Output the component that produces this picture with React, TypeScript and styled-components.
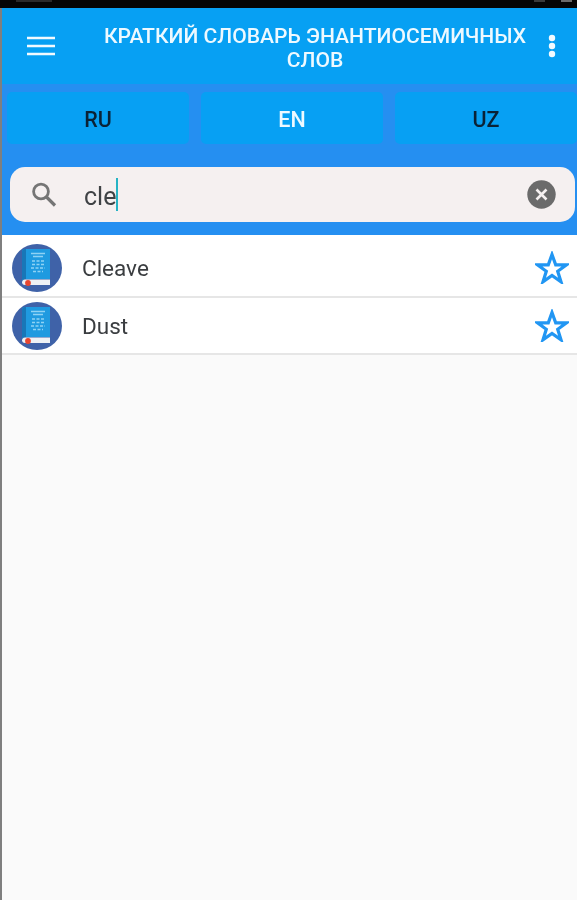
import React from "react";
import styled, { createGlobalStyle } from "styled-components";

const Global = createGlobalStyle`
  html, body { margin: 0; padding: 0; background: #fafafa; }
  * { box-sizing: border-box; }
`;

const Screen = styled.div`
  width: 577px;
  height: 900px;
  display: flex;
  flex-direction: column;
  overflow: hidden;
  font-family: Roboto, "Liberation Sans", sans-serif;
  filter: blur(0.6px);
`;

const StatusBar = styled.div`
  height: 8px;
  flex: none;
  background: #050505;
  display: flex;
  align-items: flex-start;
  padding: 0 5px 0 16px;
`;

const StatusMark = styled.span<{ $w: number; $tone: string; $gap?: number }>`
  width: ${(p) => p.$w}px;
  height: 2px;
  background: ${(p) => p.$tone};
  margin-left: ${(p) => p.$gap ?? 0}px;
`;

const Body = styled.div`
  flex: 1;
  display: flex;
  min-height: 0;
`;

const EdgeStrip = styled.div`
  width: 2px;
  flex: none;
  background: #7f7f7f;
`;

const Main = styled.div`
  flex: 1;
  min-width: 0;
  display: flex;
  flex-direction: column;
  background: #fafafa;
`;

const AppBar = styled.header`
  height: 76px;
  flex: none;
  display: flex;
  align-items: center;
  background: #07a0f3;
`;

const MenuButton = styled.div`
  width: 78px;
  flex: none;
  display: flex;
  justify-content: center;
  margin-top: -1px;
`;

const Title = styled.h1`
  flex: 1;
  min-width: 0;
  margin: 4px 0 0;
  padding-left: 23px;
  color: #eef9ff;
  font-size: 21.1px;
  line-height: 24.5px;
  font-weight: 500;
  text-align: center;
  white-space: nowrap;
`;

const MoreButton = styled.div`
  width: 50px;
  flex: none;
  display: flex;
  justify-content: center;
`;

const LangPanel = styled.div`
  height: 151px;
  flex: none;
  background: #258ff1;
  display: flex;
  flex-direction: column;
`;

const Tabs = styled.div`
  display: grid;
  grid-template-columns: 182px 182px 182px;
  column-gap: 12px;
  padding: 8px 0 0 5px;
`;

const Tab = styled.div<{ $active?: boolean }>`
  height: 52px;
  padding-top: 2px;
  border-radius: 5px;
  background: #07a0f3;
  display: flex;
  align-items: center;
  justify-content: center;
  font-size: 21.5px;
  font-weight: 500;
  color: ${(p) => (p.$active ? "#eef9ff" : "#0a2236")};
`;

const Search = styled.div`
  margin: 23px 2px 0 8px;
  height: 55px;
  border-radius: 15px;
  background: #f5f0f0;
  display: flex;
  align-items: center;
  padding: 0 19px 0 21px;
`;

const SearchText = styled.div`
  flex: 1;
  margin-left: 27px;
  display: flex;
  align-items: center;
  font-size: 25px;
  color: #3f4245;
`;

const Typed = styled.span`
  padding-top: 3px;
`;

const Caret = styled.span`
  width: 2px;
  height: 33px;
  background: #26b3c4;
`;

const List = styled.div`
  display: flex;
  flex-direction: column;
`;

const Row = styled.div<{ $first?: boolean }>`
  height: ${(p) => (p.$first ? "63px" : "57px")};
  padding: ${(p) => (p.$first ? "4px" : "0")} 8px 0 10px;
  display: flex;
  align-items: center;
  background: #fff;
  border-bottom: 2px solid #e6e6e6;
`;

const Word = styled.span`
  flex: 1;
  margin-left: 20px;
  font-size: 22.5px;
  color: #3a3d40;
`;

const Hamburger = () => (
  <svg width="28" height="20" viewBox="0 0 28 20" fill="none" stroke="#f2faff" strokeWidth="2.6">
    <path d="M0 2h28M0 10h28M0 18h28" />
  </svg>
);

const Dots = () => (
  <svg width="8" height="24" viewBox="0 0 8 24" fill="#f2faff">
    <circle cx="4" cy="4" r="3.2" />
    <circle cx="4" cy="12" r="3.2" />
    <circle cx="4" cy="20" r="3.2" />
  </svg>
);

const SearchIcon = () => (
  <svg width="26" height="25" viewBox="0 0 26 25" fill="none" stroke="#757575" strokeWidth="2.8">
    <circle cx="10" cy="9.500" r="7.4" />
    <path d="M15.500 15l8.500 8.500" strokeWidth="3.2" />
  </svg>
);

const ClearIcon = () => (
  <svg width="29" height="29" viewBox="0 0 29 29">
    <circle cx="14.500" cy="14.500" r="14.200" fill="#6b6b6b" />
    <path d="M9.500 9.500l10 10M19.500 9.500l-10 10" stroke="#f5f0f0" strokeWidth="2.6" />
  </svg>
);

const BookAvatar = () => (
  <svg width="50" height="48" viewBox="0 0 50 48">
    <ellipse cx="25" cy="24" rx="25" ry="24" fill="#3f62a8" />
    <path d="M10 38V8c0-1.500 1-3 2.500-3H38v30H13c-1.800 0-3 1.200-3 3z" fill="#1f9ae0" />
    <path d="M10 8c0-1.500 1-3 2.500-3H14v30h-1c-1.300 0-2.300.4-3 1z" fill="#1877b8" />
    <path d="M13 35.500h25v5.500H13c-2 0-3-1.200-3-2.700s1.500-2.800 3-2.800z" fill="#eef1f5" />
    <circle cx="16" cy="39" r="2.900" fill="#e8452f" />
    <g stroke="#8ed2f4" strokeWidth="1.300">
      <path d="M19 9.500h14M21 12.500h10" />
      <path d="M20 17h12M20 20.500h12M19 24h14M21 27.500h10" strokeDasharray="3 1.500" />
    </g>
  </svg>
);

const Star = () => (
  <svg width="34" height="33" viewBox="0 0 34 33" fill="#fff" stroke="#2196f3" strokeWidth="3.2" strokeLinejoin="miter">
    <path d="M17 3.500l3.700 10.300H31.500l-8.800 6.500 3.300 10.500-9-6.400-9 6.400 3.300-10.500-8.800-6.500h10.800z" />
  </svg>
);

const words = ["Cleave", "Dust"];

export default function App() {
  return (
    <Screen>
      <Global />
      <StatusBar>
        <StatusMark $w={36} $tone="#2a2a2a" />
        <StatusMark $w={11} $tone="#3a3a3a" $gap={482} />
        <StatusMark $w={11} $tone="#6a6a6a" $gap={16} />
      </StatusBar>
      <Body>
        <EdgeStrip />
        <Main>
          <AppBar>
            <MenuButton><Hamburger /></MenuButton>
            <Title>КРАТКИЙ СЛОВАРЬ ЭНАНТИОСЕМИЧНЫХ<br />СЛОВ</Title>
            <MoreButton><Dots /></MoreButton>
          </AppBar>
          <LangPanel>
            <Tabs>
              <Tab>RU</Tab>
              <Tab $active>EN</Tab>
              <Tab>UZ</Tab>
            </Tabs>
            <Search>
              <SearchIcon />
              <SearchText><Typed>cle</Typed><Caret /></SearchText>
              <ClearIcon />
            </Search>
          </LangPanel>
          <List>
            {words.map((w, i) => (
              <Row key={w} $first={i === 0}>
                <BookAvatar />
                <Word>{w}</Word>
                <Star />
              </Row>
            ))}
          </List>
        </Main>
      </Body>
    </Screen>
  );
}
